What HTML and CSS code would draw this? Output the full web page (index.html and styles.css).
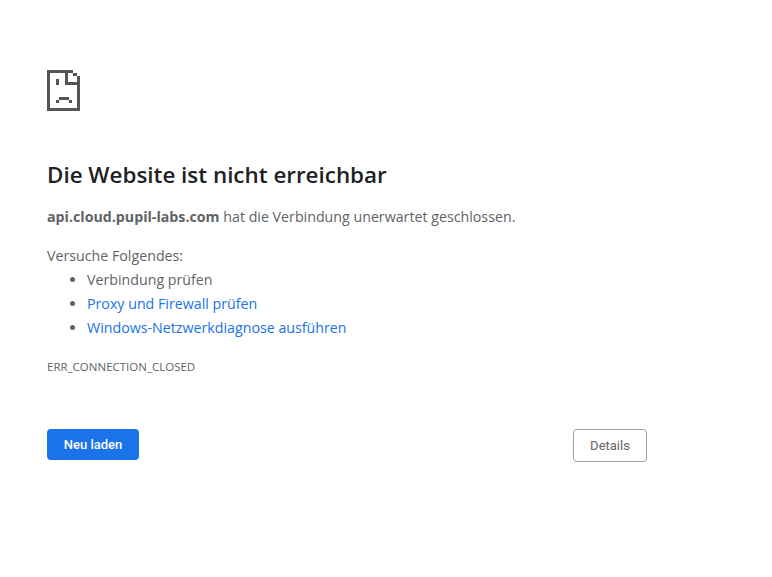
FILE: index.html
```html
<!DOCTYPE html>
<html lang="de">
<head>
<meta charset="utf-8">
<title>api.cloud.pupil-labs.com</title>
<link rel="stylesheet" href="styles.css">
</head>
<body>
<main class="page">
  <svg class="icon" width="33" height="41" viewBox="0 0 33 41" shape-rendering="crispEdges" aria-hidden="true">
    <path d="M0 0H26V3H21V12H30V6H33V41H0ZM3 3V38H30V15H18V3Z"/>
    <path d="M26 3H30V6H26Z"/>
    <path d="M9 9H12V15H9Z"/>
    <path d="M12 27H22V30H12ZM9 30H12V33H9ZM22 30H25V33H22Z"/>
  </svg>
  <h1 class="title">Die Website ist nicht erreichbar</h1>
  <p class="summary"><strong>api.cloud.pupil-labs.com</strong> hat die Verbindung unerwartet geschlossen.</p>
  <p class="try">Versuche Folgendes:</p>
  <ul class="tips">
    <li>Verbindung prüfen</li>
    <li><a href="#">Proxy und Firewall prüfen</a></li>
    <li><a href="#">Windows-Netzwerkdiagnose ausführen</a></li>
  </ul>
  <div class="code">ERR_CONNECTION_CLOSED</div>
  <div class="actions">
    <button class="btn primary">Neu laden</button>
    <button class="btn secondary">Details</button>
  </div>
</main>
</body>
</html>
```
FILE: styles.css
```css
html, body { margin: 0; background: #fff; }
body { font-family: "Open Sans", "Noto Sans", sans-serif; color: #5f6368; font-size: 14.22px; }
.page { width: 600px; padding: 70px 0 0 47px; }
.icon { display: block; fill: #555; fill-rule: evenodd; }
.title { margin: 48px 0 0; font-size: 22.4px; line-height: 32px; font-weight: 600; color: #202124; }
.summary { margin: 14px 0 0; line-height: 24px; }
.try { margin: 15px 0 0; line-height: 24px; }
.tips { margin: 0; padding: 0 0 0 40px; line-height: 24px; }
.tips a { color: #1a73e8; text-decoration: none; }
.code { margin-top: 19px; font-size: 11.5px; line-height: 16px; }
.actions { display: flex; justify-content: space-between; align-items: flex-start; margin-top: 54px; }
.btn { font-family: Roboto, sans-serif; font-size: 13px; border-radius: 4px; cursor: pointer; }
.primary { width: 92px; height: 31px; background: #1a73e8; color: #fff; border: 0; font-weight: 500; }
.secondary { width: 74px; height: 33px; background: #fff; color: #5f6368; border: 1px solid #9aa0a6; }
```
